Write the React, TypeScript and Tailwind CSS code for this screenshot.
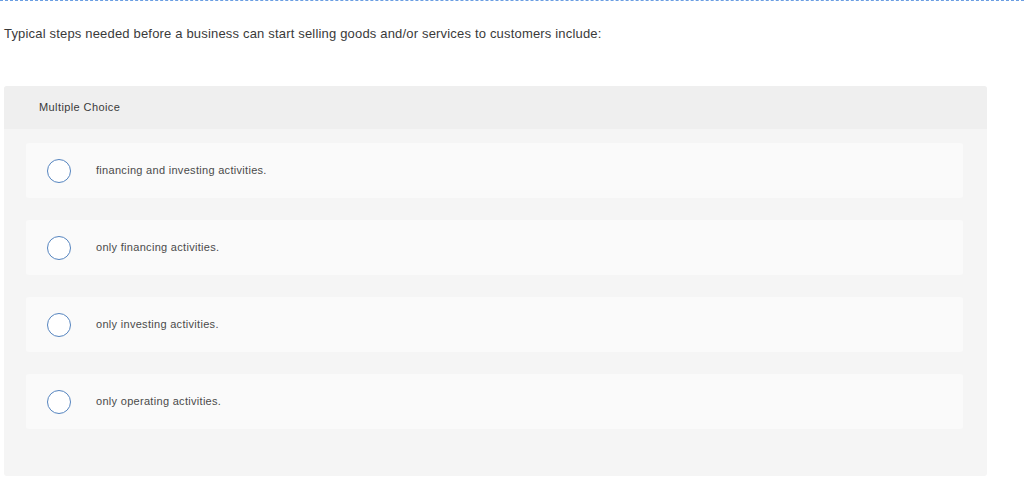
const options = [
  "financing and investing activities.",
  "only financing activities.",
  "only investing activities.",
  "only operating activities.",
];

export default function App() {
  return (
    <div className="h-[493px] w-[1024px] bg-white font-['Liberation_Sans',Arial,sans-serif] text-[#333]">
      <div className="border-t border-dashed border-[#6a9ee2]" />
      <p className="px-1 pt-[24px] text-[13px] leading-[18px] tracking-[0.18px] text-[#3a3a3a]">
        Typical steps needed before a business can start selling goods and/or services to customers include:
      </p>
      <div className="mt-[43px] ml-1 w-[983px] rounded-[3px] bg-[#f5f5f5] pb-[47px]">
        <div className="flex h-[43px] items-center rounded-t-[3px] bg-[#efefef] pl-[35px] text-[11px] tracking-[0.4px] text-[#3a3a3a]">
          Multiple Choice
        </div>
        <div className="flex flex-col gap-[22px] pt-[14px] pl-[22px]">
          {options.map((o) => (
            <div key={o} className="flex h-[55px] w-[937px] items-center rounded-[3px] bg-[#fafafa]">
              <span className="ml-[21px] h-[24px] w-[24px] rounded-full border border-[#5584bf] bg-white" />
              <span className="ml-[25px] text-[11px] tracking-[0.3px] text-[#4a4a4a]">{o}</span>
            </div>
          ))}
        </div>
      </div>
    </div>
  );
}
